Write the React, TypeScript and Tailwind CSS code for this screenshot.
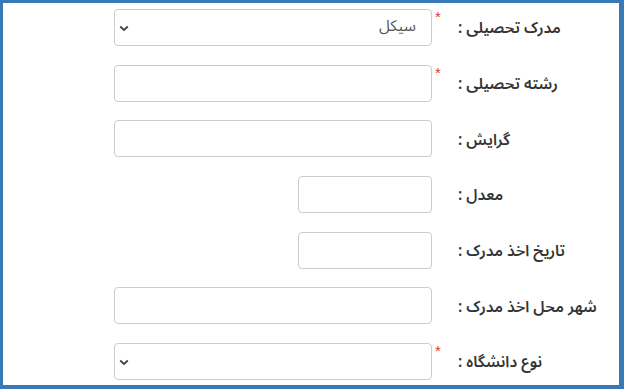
import React from "react";

const AR = '"Noto Sans Arabic", "Noto Sans", sans-serif';

function Chevron() {
  return (
    <svg width="10" height="7" viewBox="0 0 10 7" className="absolute left-[4px] top-[15px]">
      <path d="M1.2 1.5 L5 5 L8.8 1.5" fill="none" stroke="#444" strokeWidth="1.8" />
    </svg>
  );
}

type RowProps = {
  label: string;
  required?: boolean;
  small?: boolean;
  select?: boolean;
  value?: string;
};

function Row({ label, required, small, select, value }: RowProps) {
  return (
    <div className="flex h-[37px] items-center">
      <div className="flex w-[318px] justify-end h-full">
        <div
          className={`relative h-full ${small ? "w-[134px]" : "w-[318px]"} rounded-[4px] border border-[#cccccc] bg-white`}
        >
          {select && <Chevron />}
          {value && (
            <span
              dir="rtl"
              className="absolute right-[15px] top-[5px] text-[15.5px] text-[#555555]"
              style={{ fontFamily: AR }}
            >
              {value}
            </span>
          )}
        </div>
      </div>
      <div className="relative w-[26px] h-full">
        {required && (
          <span
            className="absolute left-[3px] top-[0px] text-[15px] leading-none text-[#e0392b]"
            style={{ fontFamily: '"Liberation Sans", sans-serif' }}
          >
            *
          </span>
        )}
      </div>
      <span
        dir="rtl"
        className="mt-[3px] text-[15.5px] font-semibold text-[#333333] whitespace-nowrap"
        style={{ fontFamily: AR }}
      >
        {label}
      </span>
    </div>
  );
}

export default function App() {
  return (
    <div className="w-[624px] h-[389px] bg-white border-l-[3px] border-t-[3px] border-r-[5px] border-b-[4px] border-[#3a78b6] overflow-hidden">
      <div className="flex flex-col gap-[18.67px] pt-[6px] pl-[111px]">
        <Row label="مدرک تحصیلی :" required select value="سیکل" />
        <Row label="رشته تحصیلی :" required />
        <Row label="گرایش :" />
        <Row label="معدل :" small />
        <Row label="تاریخ اخذ مدرک :" small />
        <Row label="شهر محل اخذ مدرک :" />
        <Row label="نوع دانشگاه :" required select />
      </div>
    </div>
  );
}
